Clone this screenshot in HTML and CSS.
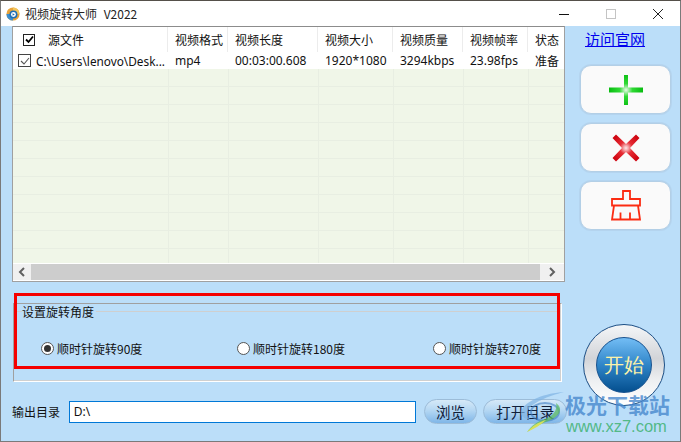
FILE: index.html
```html
<!DOCTYPE html>
<html lang="zh">
<head>
<meta charset="utf-8">
<title>视频旋转大师 V2022</title>
<link rel="stylesheet" href="styles.css">
</head>
<body>
<div class="window">
  <header class="titlebar">
    <svg class="app-icon" width="14" height="14" viewBox="0 0 16 16"><circle cx="8" cy="8" r="7.500" fill="#e8a33a"/><path d="M8 .5A7.500 7.500 0 0 1 15.500 8H8z" fill="#f3c65c"/><path d="M.5 8A7.500 7.500 0 0 0 8 15.500V8z" fill="#3a8fd0"/><circle cx="8.500" cy="8.500" r="4.600" fill="#1f6fb5"/><circle cx="8.500" cy="8.500" r="2.800" fill="#fff"/><path d="M7.500 7l2.600 1.500-2.600 1.500z" fill="#1f6fb5"/></svg>
    <span class="title">视频旋转大师 V2022</span>
    <div class="win-controls">
      <svg width="12" height="12" viewBox="0 0 12 12"><path d="M1 6.500h10" stroke="#111" fill="none"/></svg>
      <svg width="12" height="12" viewBox="0 0 12 12"><rect x="1.500" y="1.500" width="9" height="9" stroke="#c4c4c4" fill="none"/></svg>
      <svg width="12" height="12" viewBox="0 0 12 12"><path d="M1 1l10 10M11 1L1 11" stroke="#222" fill="none"/></svg>
    </div>
  </header>
  <div class="client">
    <div class="top">
      <section class="list">
        <div class="row head">
          <div class="cell first"><span class="hcheck"><svg width="9" height="9" viewBox="0 0 9 9"><path d="M1 4.500l2.500 2.500L8 1.500" stroke="#000" stroke-width="1.800" fill="none"/></svg></span><span>源文件</span></div>
          <div class="cell">视频格式</div>
          <div class="cell">视频长度</div>
          <div class="cell">视频大小</div>
          <div class="cell">视频质量</div>
          <div class="cell">视频帧率</div>
          <div class="cell">状态</div>
        </div>
        <div class="row data">
          <div class="cell first"><span class="rcheck"><svg width="10" height="10" viewBox="0 0 10 10"><path d="M1 5l3 3 5-6" stroke="#555" stroke-width="1.100" fill="none"/></svg></span><span class="path-text">C:\Users\lenovo\Desk...</span></div>
          <div class="cell">mp4</div>
          <div class="cell num">00:03:00.608</div>
          <div class="cell num">1920*1080</div>
          <div class="cell num">3294kbps</div>
          <div class="cell num">23.98fps</div>
          <div class="cell">准备</div>
        </div>
        <div class="filler"></div>
        <div class="scrollbar">
          <span class="sb-btn sb-left"><svg width="8" height="10" viewBox="0 0 8 10"><path d="M6 1L2 5l4 4" stroke="#606060" stroke-width="2" fill="none"/></svg></span>
          <span class="sb-track"></span>
          <span class="sb-btn sb-right"><svg width="8" height="10" viewBox="0 0 8 10"><path d="M2 1l4 4-4 4" stroke="#606060" stroke-width="2" fill="none"/></svg></span>
        </div>
      </section>
      <aside class="side">
        <a class="site-link" href="#">访问官网</a>
        <button class="tool">
          <svg width="34" height="30" viewBox="0 0 34 30"><defs><radialGradient id="g" gradientUnits="userSpaceOnUse" cx="17" cy="15" r="17"><stop offset="0" stop-color="#e8fbe8"/><stop offset=".14" stop-color="#a8eeaa"/><stop offset=".38" stop-color="#2fd934"/><stop offset="1" stop-color="#08bc10"/></radialGradient></defs><path d="M15 0h4v12.500h15v5H19V30h-4V17.500H0v-5h15z" fill="url(#g)"/></svg>
        </button>
        <button class="tool">
          <svg width="28" height="28" viewBox="0 0 28 28"><defs><radialGradient id="r" gradientUnits="userSpaceOnUse" cx="14" cy="14" r="15"><stop offset="0" stop-color="#fde8e8"/><stop offset=".16" stop-color="#f4a8ac"/><stop offset=".42" stop-color="#e62c34"/><stop offset="1" stop-color="#cf0612"/></radialGradient></defs><path d="M4 .5L14 10 24 .5 27.500 4 18 14l9.500 10-3.500 3.500L14 18 4 27.500.5 24 10 14 .5 4z" fill="url(#r)"/></svg>
        </button>
        <button class="tool">
          <svg width="30" height="31" viewBox="0 0 30 31"><path d="M12 1h7v8h10v6.500H1V9h11zM3 15.500h24l2 14H1zM9.500 29.500v-7M19 29.500v-7" fill="none" stroke="#fb2c12" stroke-width="1.800"/></svg>
        </button>
      </aside>
    </div>
    <div class="bottom">
      <div class="left-col">
        <fieldset class="group">
          <div class="legend-line"><span class="legend">设置旋转角度</span></div>
          <div class="radios">
            <label class="radio"><span class="dot on"></span>顺时针旋转90度</label>
            <label class="radio"><span class="dot"></span>顺时针旋转180度</label>
            <label class="radio"><span class="dot"></span>顺时针旋转270度</label>
          </div>
        </fieldset>
        <div class="output">
          <span class="out-label">输出目录</span>
          <div class="path">D:\</div>
          <button class="pill browse">浏览</button>
          <button class="pill open">打开目录</button>
        </div>
      </div>
      <button class="start"><span class="start-inner">开始</span></button>
    </div>
  </div>
  <div class="highlight"></div>
  <div class="watermark">
    <svg class="wm-logo" width="45" height="42" viewBox="0 0 45 42"><path d="M44 1C26 2 6 9 1 20c-1 5 3 8 10 9-4-3-5-6-3-10C12 12 28 5 44 1z" fill="#7fb4e4" opacity=".7"/><ellipse cx="25" cy="21" rx="14" ry="9" fill="none" stroke="#3f7fc4" stroke-width="2" opacity=".6"/><path d="M36 12c8 6 4 14-10 19-6 2-11 5-19 10 5-7 11-11 18-13 8-3 13-9 11-16z" fill="#5dbb63" opacity=".75"/><path d="M7 41c5-6 12-10 19-12-5 5-12 9-19 12z" fill="#d8e05a"/></svg>
    <div class="wm-text"><span class="wm-cn">极光下载站</span><span class="wm-en">www.xz7.com</span></div>
  </div>
</div>
</body>
</html>
```

FILE: styles.css
```css
* { box-sizing: border-box; }
html, body { margin: 0; padding: 0; }
body {
  width: 681px;
  height: 442px;
  overflow: hidden;
  font-family: "Noto Sans CJK SC", "Noto Sans", sans-serif;
  font-size: 12px;
  color: #111;
}
.window {
  position: relative;
  width: 681px;
  height: 442px;
  display: flex;
  flex-direction: column;
  border: 1px solid #7a7a7a;
  border-top-color: #55504a;
  background: #bbdef9;
}
.titlebar {
  height: 25px;
  flex: none;
  display: flex;
  align-items: center;
  background: #fff;
  padding-left: 5px;
}
.app-icon { margin-right: 5px; }
.title { font-size: 12px; color: #222; word-spacing: 4px; }
.win-controls {
  margin-left: auto;
  display: flex;
  gap: 35px;
  padding-right: 16px;
}
.client {
  flex: 1;
  display: flex;
  flex-direction: column;
  padding-left: 11px;
}
.top { display: flex; height: 256px; }
.list {
  width: 553px;
  height: 256px;
  display: flex;
  flex-direction: column;
  background: #fff;
  border: 1px solid #a0a0a0;
  border-top-color: #8c8c8c;
}
.row {
  display: grid;
  grid-template-columns: 155px 60px 90px 75px 70px 65px 1fr;
  font-family: "Noto Sans", "Noto Sans CJK SC", sans-serif;
}
.head { height: 25px; }
.data { height: 17px; }
.cell {
  display: flex;
  align-items: center;
  padding-left: 7px;
  white-space: nowrap;
  overflow: hidden;
}
.head .cell { border-right: 1px solid #ececec; }
.head .cell:last-child { border-right: 0; }
.head .first { padding-left: 10px; gap: 13px; }
.hcheck {
  width: 12px;
  height: 12px;
  border: 1px solid #222;
  display: flex;
  align-items: center;
  justify-content: center;
  background: #fff;
}
.data .first { padding-left: 5px; gap: 5px; }
.path-text { font-size: 11.800px; }
.num { font-size: 12px; }
.rcheck {
  width: 13px;
  height: 13px;
  flex: none;
  border: 1px solid #444;
  display: flex;
  align-items: center;
  justify-content: center;
}
.filler {
  flex: 1;
  margin-bottom: 1px;
  background-color: #f0f6e8;
  background-image:
    linear-gradient(#e8eee2, #e8eee2),
    linear-gradient(#e8eee2, #e8eee2),
    linear-gradient(#e8eee2, #e8eee2),
    linear-gradient(#e8eee2, #e8eee2),
    linear-gradient(#e8eee2, #e8eee2),
    linear-gradient(#e8eee2, #e8eee2),
    repeating-linear-gradient(to bottom, transparent 0, transparent 17px, #e8eee2 17px, #e8eee2 18px);
  background-size: 1px 100%, 1px 100%, 1px 100%, 1px 100%, 1px 100%, 1px 100%, 100% 100%;
  background-position: 155px 0, 215px 0, 305px 0, 380px 0, 450px 0, 515px 0, 0 0;
  background-repeat: no-repeat;
}
.scrollbar {
  height: 16px;
  flex: none;
  display: flex;
  margin-bottom: 1px;
}
.sb-btn {
  display: flex;
  align-items: center;
  justify-content: center;
  background: #f0f0f0;
  flex: none;
}
.sb-left { width: 18px; }
.sb-right { width: 24px; }
.sb-track { flex: 1; background: #cdcdcd; }
.side {
  flex: 1;
  display: flex;
  flex-direction: column;
  align-items: flex-start;
  padding: 3px 0 0 15px;
}
.site-link {
  font-size: 15px;
  line-height: 20px;
  color: #0000ee;
  margin: 0 0 16px 5px;
  text-decoration: underline;
}
.tool {
  width: 91px;
  height: 49px;
  margin: 0 0 9px;
  padding: 0;
  display: flex;
  align-items: center;
  justify-content: center;
  background: #fafafa;
  border: 1px solid #b3cfe6;
  border-radius: 11px;
  box-shadow: 0 0 0 1px rgba(170, 195, 220, .35);
}
.bottom {
  flex: 1;
  display: flex;
}
.left-col { width: 555px; }
.group {
  width: 549px;
  height: 79px;
  margin: 21px 0 0 1px;
  padding: 0;
  border: 1px solid #fff;
  border-top-color: #a0a0a0;
  border-left-color: #a0a0a0;
  box-shadow: inset -1px -1px 0 #d0d0d0;
}
.legend-line {
  height: 16px;
  display: flex;
  align-items: center;
  padding: 0 0 0 8px;
  background: linear-gradient(#cfcfcf, #cfcfcf) 0 7px / 100% 1px no-repeat;
}
.legend {
  background: #bbdef9;
  padding: 0 2px 0 0;
  line-height: 16px;
}
.radios {
  display: grid;
  grid-template-columns: 196px 196px 1fr;
  padding: 20px 0 0 27px;
}
.radio {
  display: flex;
  align-items: center;
  gap: 3px;
  line-height: 17px;
  white-space: nowrap;
}
.dot {
  width: 13px;
  height: 13px;
  border-radius: 50%;
  background: #fff;
  border: 1px solid #555;
  position: relative;
  flex: none;
}
.dot.on::after {
  content: "";
  position: absolute;
  left: 2px;
  top: 2px;
  width: 7px;
  height: 7px;
  border-radius: 50%;
  background: #333;
}
.output {
  display: flex;
  align-items: center;
  height: 25px;
  margin-top: 17px;
}
.out-label { width: 57px; }
.path {
  width: 348px;
  height: 22px;
  border: 1px solid #0078d7;
  background: #fff;
  padding-left: 4px;
  line-height: 20px;
  font-family: "Noto Sans", sans-serif;
  font-size: 12px;
}
.pill {
  height: 25px;
  padding: 0;
  border: 1px solid #9cbcd8;
  border-radius: 13px;
  background: linear-gradient(#d6e9f8 0, #b4d7f3 45%, #7fb6e8 100%);
  font-family: inherit;
  font-size: 14.500px;
  color: #10203a;
}
.browse { width: 54px; margin-left: 8px; }
.open { width: 84px; margin-left: 6px; }
.start {
  width: 82px;
  height: 82px;
  margin: 42px 0 0 16px;
  padding: 12px;
  border-radius: 50%;
  border: 1px solid #1d4f85;
  background: linear-gradient(#f4f6f8 0, #d2d4d8 42%, #eef0f2 70%, #fff 100%);
  flex: none;
}
.start-inner {
  display: flex;
  align-items: center;
  justify-content: center;
  width: 100%;
  height: 100%;
  border-radius: 50%;
  border: 1px solid #17528f;
  background: linear-gradient(#73bdf5 0, #2f85c8 50%, #044f8f 100%);
  color: #fdf3a8;
  font-size: 20px;
  font-family: inherit;
}
.highlight {
  position: absolute;
  left: 13px;
  top: 292px;
  width: 546px;
  height: 76px;
  border: 3px solid #f50000;
}
.watermark {
  position: absolute;
  left: 519px;
  top: 390px;
  display: flex;
  pointer-events: none;
}
.wm-logo { flex: none; }
.wm-text {
  display: flex;
  flex-direction: column;
}
.wm-cn {
  font-size: 21px;
  line-height: 27px;
  font-weight: 700;
  color: rgba(70, 135, 205, .8);
  white-space: nowrap;
}
.wm-en {
  font-family: "Liberation Sans", sans-serif;
  font-size: 16.500px;
  line-height: 16px;
  margin-left: 1px;
  color: rgba(70, 180, 120, .9);
  white-space: nowrap;
}
```
